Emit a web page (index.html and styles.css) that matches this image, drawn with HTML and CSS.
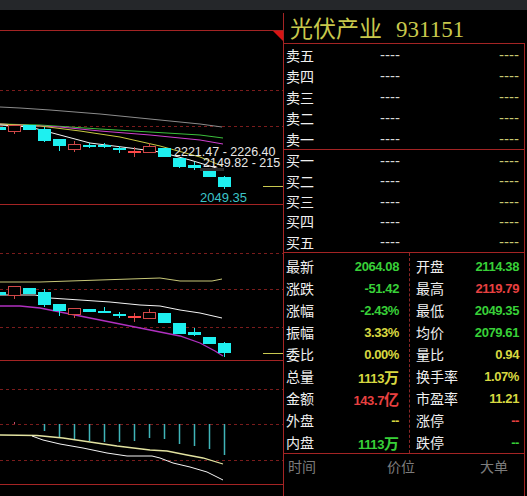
FILE: index.html
```html
<!DOCTYPE html>
<html lang="zh">
<head>
<meta charset="utf-8">
<title>光伏产业 931151</title>
<link rel="stylesheet" href="styles.css">
</head>
<body>
<div class="app">
  <div class="topbar"></div>
  <div class="main">
    <svg class="chart" width="283" height="486" viewBox="0 10 283 486" xmlns="http://www.w3.org/2000/svg">
      <g class="grid">
        <line class="solid" x1="0" y1="30.5" x2="283" y2="30.5"/>
        <polygon class="corner" points="273,31 283,31 283,41"/>
        <line class="dash" x1="0" y1="90.5" x2="283" y2="90.5"/>
        <line class="dash" x1="0" y1="126.5" x2="283" y2="126.5"/>
        <line class="solid" x1="0" y1="204.5" x2="283" y2="204.5"/>
        <line class="dash" x1="0" y1="253.5" x2="283" y2="253.5"/>
        <line class="dash" x1="0" y1="289.5" x2="283" y2="289.5"/>
        <line class="dash" x1="0" y1="327.5" x2="283" y2="327.5"/>
        <line class="solid" x1="0" y1="360.5" x2="283" y2="360.5"/>
        <line class="dash" x1="0" y1="389.5" x2="283" y2="389.5"/>
        <line class="dash" x1="0" y1="424.5" x2="283" y2="424.5"/>
        <line class="dash" x1="0" y1="460.5" x2="283" y2="460.5"/>
        <line class="solid" x1="0" y1="484.5" x2="283" y2="484.5"/>
      </g>

      <!-- main price panel -->
      <polyline class="ma gray" points="0,107 20,108 50,110 100,114 150,119 200,124 222,127"/>
      <polyline class="ma green" points="0,124 40,125 100,129 150,132 200,135 223,138"/>
      <polyline class="ma magenta" points="0,124 60,127 100,131 150,135 200,140 223,144"/>
      <polyline class="ma yellow" points="0,124 40,126 80,131 120,137 160,146 200,157 222,166"/>
      <polyline class="ma white" points="0,125 30,127 60,135 90,143 130,148 160,152 190,160 223,170"/>

      <g class="candles">
        <rect class="up" x="0" y="127" width="6" height="3"/>
        <line class="wick-red" x1="14.5" y1="131" x2="14.5" y2="134"/>
        <rect class="down" x="8.5" y="125.5" width="12" height="6"/>
        <rect class="up" x="23" y="125" width="13" height="5"/>
        <line class="wick" x1="44.5" y1="127" x2="44.5" y2="142"/>
        <rect class="up" x="38" y="129" width="13" height="12"/>
        <line class="wick" x1="59.5" y1="139" x2="59.5" y2="151"/>
        <rect class="up" x="53" y="139" width="13" height="7"/>
        <line class="wick-red" x1="74.5" y1="141" x2="74.5" y2="152"/>
        <rect class="down" x="68.5" y="144.5" width="12" height="5"/>
        <line class="wick" x1="89.5" y1="143" x2="89.5" y2="148"/>
        <rect class="up" x="83" y="145" width="13" height="2"/>
        <line class="wick" x1="104.5" y1="143" x2="104.5" y2="148"/>
        <rect class="up" x="98" y="145" width="13" height="2"/>
        <line class="wick" x1="119.5" y1="146" x2="119.5" y2="153"/>
        <rect class="up" x="113" y="148" width="13" height="2"/>
        <line class="wick-red" x1="134.5" y1="147" x2="134.5" y2="157"/>
        <rect class="red" x="128" y="151" width="13" height="2"/>
        <line class="wick-red" x1="149.5" y1="143" x2="149.5" y2="147"/>
        <rect class="down" x="143.5" y="146.5" width="12" height="6"/>
        <rect class="up" x="158" y="148" width="13" height="9"/>
        <line class="wick" x1="179.5" y1="158" x2="179.5" y2="168"/>
        <rect class="up" x="173" y="158" width="13" height="9"/>
        <line class="wick" x1="194.5" y1="162" x2="194.5" y2="170"/>
        <rect class="up" x="188" y="165" width="13" height="3"/>
        <rect class="up" x="203" y="171" width="13" height="6"/>
        <line class="wick" x1="224.5" y1="176" x2="224.5" y2="189"/>
        <rect class="up" x="218" y="177" width="13" height="10"/>
      </g>

      <rect class="labelbg" x="200" y="168" width="24" height="3"/>
      <text class="lbl" x="174" y="155.5">2221.47 - 2226.40</text>
      <text class="lbl" x="203" y="167">2149.82 - 215</text>
      <text class="low" x="200" y="202">2049.35</text>
      <line class="mark" x1="263" y1="186.5" x2="283" y2="186.5"/>

      <!-- second panel -->
      <polyline class="ma khaki" points="0,282 40,282 100,280 160,278 180,281 212,281 222,279"/>
      <polyline class="ma white" points="0,295 35,295 50,298 80,300 110,302 140,305 160,306 180,310 200,313 222,318"/>
      <polyline class="ma purple" points="0,306 20,306 40,308 60,312 90,318 120,324 150,330 180,336 200,343 215,351 223,356"/>

      <g class="candles">
        <rect class="up" x="0" y="292" width="6" height="3"/>
        <line class="wick-red" x1="14.5" y1="295" x2="14.5" y2="299"/>
        <rect class="down" x="8.5" y="286.5" width="12" height="9"/>
        <rect class="up" x="23" y="288" width="13" height="6"/>
        <line class="wick" x1="44.5" y1="289" x2="44.5" y2="307"/>
        <rect class="up" x="38" y="292" width="13" height="13"/>
        <line class="wick" x1="59.5" y1="304" x2="59.5" y2="316"/>
        <rect class="up" x="53" y="304" width="13" height="7"/>
        <line class="wick-red" x1="74.5" y1="314" x2="74.5" y2="318"/>
        <rect class="down" x="68.5" y="308.5" width="12" height="6"/>
        <rect class="up" x="83" y="309" width="13" height="3"/>
        <line class="wick" x1="104.5" y1="307" x2="104.5" y2="313"/>
        <rect class="up" x="98" y="311" width="13" height="2"/>
        <line class="wick" x1="119.5" y1="312" x2="119.5" y2="318"/>
        <rect class="up" x="113" y="314" width="13" height="2"/>
        <line class="wick-red" x1="134.5" y1="313" x2="134.5" y2="322"/>
        <rect class="red" x="128" y="316" width="13" height="2"/>
        <line class="wick-red" x1="149.5" y1="309" x2="149.5" y2="312"/>
        <rect class="down" x="143.5" y="312.5" width="12" height="6"/>
        <rect class="up" x="158" y="313" width="13" height="10"/>
        <rect class="up" x="173" y="323" width="13" height="11"/>
        <line class="wick" x1="194.5" y1="328" x2="194.5" y2="336"/>
        <rect class="up" x="188" y="332" width="13" height="3"/>
        <rect class="up" x="203" y="337" width="13" height="7"/>
        <line class="wick" x1="224.5" y1="342" x2="224.5" y2="357"/>
        <rect class="up" x="218" y="343" width="13" height="10"/>
      </g>
      <line class="mark" x1="263" y1="353.5" x2="283" y2="353.5"/>

      <!-- third panel -->
      <g class="bars">
        <line x1="44.5" y1="424" x2="44.5" y2="431"/>
        <line x1="59.5" y1="424" x2="59.5" y2="438"/>
        <line x1="74.5" y1="424" x2="74.5" y2="439"/>
        <line x1="89.5" y1="424" x2="89.5" y2="441"/>
        <line x1="104.5" y1="424" x2="104.5" y2="442"/>
        <line x1="119.5" y1="424" x2="119.5" y2="442"/>
        <line x1="134.5" y1="424" x2="134.5" y2="441"/>
        <line x1="149.5" y1="424" x2="149.5" y2="438"/>
        <line x1="164.5" y1="424" x2="164.5" y2="439"/>
        <line x1="179.5" y1="424" x2="179.5" y2="444"/>
        <line x1="194.5" y1="424" x2="194.5" y2="446"/>
        <line x1="209.5" y1="424" x2="209.5" y2="449"/>
        <line x1="224.5" y1="424" x2="224.5" y2="455"/>
      </g>
      <line class="tick" x1="14.5" y1="422" x2="14.5" y2="424"/>
      <polyline class="ma pale" points="0,435 37,435.5 63,438 90,442 117,446 150,450 167,451 187,455 203,458 223,464"/>
      <polyline class="ma white" points="32,436 43,440 60,444 83,448 107,453 127,456 152,456 160,458 173,463 190,467 207,472 223,480"/>
    </svg>

    <aside class="panel">
      <div class="title">光伏产业<span class="code">931151</span></div>
      <div class="box">
        <div class="book sell">
          <div class="row"><span class="name">卖五</span><span class="vol">----</span><span class="amt">----</span></div>
          <div class="row"><span class="name">卖四</span><span class="vol">----</span><span class="amt">----</span></div>
          <div class="row"><span class="name">卖三</span><span class="vol">----</span><span class="amt">----</span></div>
          <div class="row"><span class="name">卖二</span><span class="vol">----</span><span class="amt">----</span></div>
          <div class="row"><span class="name">卖一</span><span class="vol">----</span><span class="amt">----</span></div>
        </div>
        <div class="book buy">
          <div class="row"><span class="name">买一</span><span class="vol">----</span><span class="amt">----</span></div>
          <div class="row"><span class="name">买二</span><span class="vol">----</span><span class="amt">----</span></div>
          <div class="row"><span class="name">买三</span><span class="vol">----</span><span class="amt">----</span></div>
          <div class="row"><span class="name">买四</span><span class="vol">----</span><span class="amt">----</span></div>
          <div class="row"><span class="name">买五</span><span class="vol">----</span><span class="amt">----</span></div>
        </div>
        <div class="stats">
          <div class="col col-left">
            <div class="stat"><span class="name">最新</span><span class="val g">2064.08</span></div>
            <div class="stat"><span class="name">涨跌</span><span class="val g">-51.42</span></div>
            <div class="stat"><span class="name">涨幅</span><span class="val g">-2.43%</span></div>
            <div class="stat"><span class="name">振幅</span><span class="val y">3.33%</span></div>
            <div class="stat"><span class="name">委比</span><span class="val y">0.00%</span></div>
            <div class="stat"><span class="name">总量</span><span class="val y">1113<span class="unit">万</span></span></div>
            <div class="stat"><span class="name">金额</span><span class="val r">143.7<span class="unit">亿</span></span></div>
            <div class="stat"><span class="name">外盘</span><span class="val y">--</span></div>
            <div class="stat"><span class="name">内盘</span><span class="val g">1113<span class="unit">万</span></span></div>
          </div>
          <div class="col col-right">
            <div class="stat"><span class="name">开盘</span><span class="val g">2114.38</span></div>
            <div class="stat"><span class="name">最高</span><span class="val r">2119.79</span></div>
            <div class="stat"><span class="name">最低</span><span class="val g">2049.35</span></div>
            <div class="stat"><span class="name">均价</span><span class="val g">2079.61</span></div>
            <div class="stat"><span class="name">量比</span><span class="val y">0.94</span></div>
            <div class="stat"><span class="name">换手率</span><span class="val y">1.07%</span></div>
            <div class="stat"><span class="name">市盈率</span><span class="val y">11.21</span></div>
            <div class="stat"><span class="name">涨停</span><span class="val r">--</span></div>
            <div class="stat"><span class="name">跌停</span><span class="val g">--</span></div>
          </div>
        </div>
        <div class="ticks-head"><span>时间</span><span>价位</span><span>大单</span></div>
      </div>
    </aside>
  </div>
</div>
</body>
</html>
```

FILE: styles.css
```css
html, body {
  margin: 0;
  padding: 0;
  background: #000;
}

.app {
  width: 527px;
  height: 496px;
  overflow: hidden;
  background: #000;
  font-family: "Noto Sans CJK SC", "Liberation Sans", sans-serif;
}

.topbar {
  height: 10px;
  background: #25272a;
}

.main {
  display: flex;
  height: 486px;
}

.chart {
  display: block;
  flex: none;
  width: 283px;
  height: 486px;
  overflow: hidden;
}

.grid .solid { stroke: #a42424; stroke-width: 1; }
.grid .dash { stroke: #7a1c1c; stroke-width: 1; stroke-dasharray: 3 3; }
.grid .corner { fill: #d81414; }

.ma { fill: none; stroke-width: 1; }
.ma.gray { stroke: #8c8c8c; }
.ma.green { stroke: #3cc03c; }
.ma.magenta { stroke: #d040d0; }
.ma.yellow { stroke: #c8c840; }
.ma.white { stroke: #f4f4f4; }
.ma.khaki { stroke: #c8c878; }
.ma.purple { stroke: #b030c0; stroke-width: 1.3; }
.ma.pale { stroke: #e2e2a0; stroke-width: 1.3; }

.candles .up { fill: #1ef0f0; }
.candles .red { fill: #ff4848; }
.candles .down { fill: #000; stroke: #d04848; stroke-width: 1; }
.candles .wick { stroke: #1ef0f0; stroke-width: 1; }
.candles .wick-red { stroke: #d04848; stroke-width: 1; }

.labelbg { fill: #2a2a2a; }
.chart .lbl {
  font-family: "Liberation Sans", sans-serif;
  font-size: 12.5px;
  fill: #e8e8e8;
}
.chart .low {
  font-family: "Liberation Sans", sans-serif;
  font-size: 13px;
  fill: #3cc4c8;
}
.chart .mark { stroke: #c8c850; stroke-width: 1; }
.bars line { stroke: #40b4b8; stroke-width: 1.5; }
.chart .tick { stroke: #c05070; stroke-width: 1; }

.panel {
  flex: none;
  width: 243px;
  margin-top: 3px;
  border-left: 1px solid #a42424;
  display: flex;
  flex-direction: column;
}

.title {
  height: 30px;
  padding-left: 6px;
  font-size: 23px;
  line-height: 28px;
  color: #c8c84c;
  white-space: nowrap;
}

.title .code {
  margin-left: 14px;
  font-family: "Liberation Serif", serif;
}

.box {
  flex: 1;
  margin-right: 2px;
  border-top: 1px solid #a42424;
  border-right: 1px solid #a42424;
  display: flex;
  flex-direction: column;
}

.book {
  display: flex;
  flex-direction: column;
  border-bottom: 1px solid #a42424;
}

.book.sell { height: 106px; box-sizing: border-box; }
.book.buy { height: 103px; box-sizing: border-box; }

.row {
  flex: 1;
  display: flex;
  align-items: center;
  padding: 0 5px 0 2px;
}

.name {
  font-size: 14px;
  color: #f0f0f0;
  white-space: nowrap;
}

.row .name { width: 94px; }

.vol, .amt {
  font-family: "Liberation Sans", sans-serif;
  font-size: 15px;
}
.vol { color: #d8d8d8; }
.amt { margin-left: auto; color: #c8c870; }

.stats {
  height: 200px;
  display: flex;
  border-bottom: 1px solid #a42424;
}

.col {
  display: flex;
  flex-direction: column;
  padding-top: 2px;
}

.col-left {
  width: 126px;
  box-sizing: border-box;
  padding-left: 2px;
  padding-right: 10px;
  border-right: 1px dashed #8a2626;
}

.col-right {
  flex: 1;
  padding-left: 6px;
  padding-right: 5px;
}

.stat {
  height: 22px;
  display: flex;
  align-items: center;
  justify-content: space-between;
}

.val {
  font-family: "Liberation Sans", sans-serif;
  font-weight: bold;
  font-size: 13px;
  letter-spacing: -0.4px;
}

.val .unit {
  font-family: "Noto Sans CJK SC", sans-serif;
  font-size: 15px;
  letter-spacing: 0;
}

.g { color: #38d038; }
.r { color: #e84040; }
.y { color: #d8d840; }

.ticks-head {
  display: grid;
  grid-template-columns: 99px 93px 1fr;
  padding-left: 4px;
  height: 24px;
  align-items: center;
  font-size: 14px;
  color: #7c7c7c;
}
```
